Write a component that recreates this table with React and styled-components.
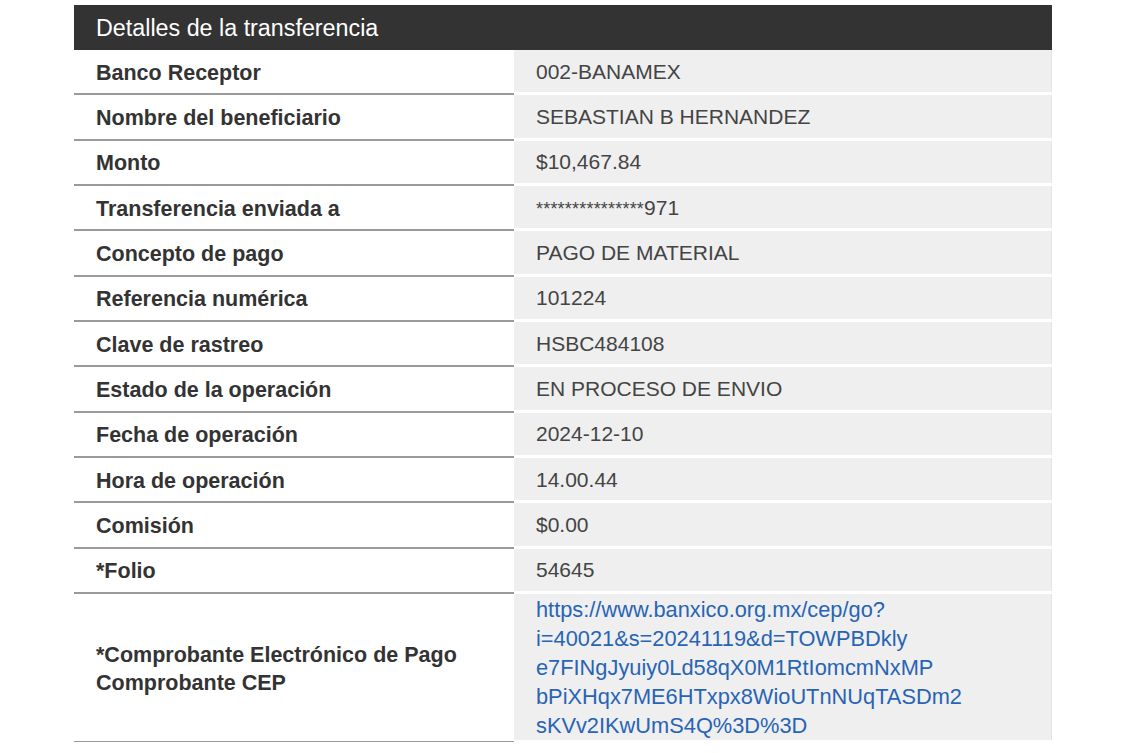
import styled, { createGlobalStyle } from 'styled-components';

const GlobalStyle = createGlobalStyle`
  body {
    margin: 0;
    background: #ffffff;
    font-family: 'Liberation Sans', Arial, sans-serif;
  }
`;

const Page = styled.div`
  padding: 5px 0 0 74px;
`;

const Table = styled.div`
  width: 978px;
`;

const Header = styled.div`
  height: 45px;
  background: #333333;
  color: #ffffff;
  font-size: 23.3px;
  display: flex;
  align-items: center;
  padding-left: 22px;
  padding-top: 1px;
  box-sizing: border-box;
`;

const Row = styled.div`
  display: grid;
  grid-template-columns: 440px 538px;
  height: ${(p) => p.$height || 45.35}px;
`;

const Label = styled.div`
  display: flex;
  align-items: center;
  padding: 2px 0 0 22px;
  border-bottom: 2px solid #9a9a9a;
  font-size: 21.5px;
  font-weight: 700;
  color: #333333;
  line-height: 28px;
  box-sizing: border-box;
`;

const Value = styled.div`
  display: flex;
  align-items: center;
  padding: 1px 0 0 22px;
  background: #efefef;
  border-bottom: 3px solid #ffffff;
  box-shadow: inset -1px 0 0 #e4e4e4;
  font-size: 21px;
  color: #444444;
  box-sizing: border-box;
`;

const Masked = styled.span`
  font-size: 18px;
  letter-spacing: 0.2px;
`;

const Link = styled.a`
  color: #2864b4;
  text-decoration: none;
  line-height: 29px;
  font-size: 21.8px;
`;

const rows = [
  ['Banco Receptor', '002-BANAMEX'],
  ['Nombre del beneficiario', 'SEBASTIAN B HERNANDEZ'],
  ['Monto', '$10,467.84'],
  ['Transferencia enviada a', null],
  ['Concepto de pago', 'PAGO DE MATERIAL'],
  ['Referencia numérica', '101224'],
  ['Clave de rastreo', 'HSBC484108'],
  ['Estado de la operación', 'EN PROCESO DE ENVIO'],
  ['Fecha de operación', '2024-12-10'],
  ['Hora de operación', '14.00.44'],
  ['Comisión', '$0.00'],
  ['*Folio', '54645'],
];

const linkLines = [
  'https://www.banxico.org.mx/cep/go?',
  'i=40021&s=20241119&d=TOWPBDkly',
  'e7FINgJyuiy0Ld58qX0M1RtIomcmNxMP',
  'bPiXHqx7ME6HTxpx8WioUTnNUqTASDm2',
  'sKVv2IKwUmS4Q%3D%3D',
];

export default function App() {
  return (
    <>
      <GlobalStyle />
      <Page>
        <Table>
          <Header>Detalles de la transferencia</Header>
          {rows.map(([label, value]) => (
            <Row key={label}>
              <Label>{label}</Label>
              <Value>
                {value === null ? (
                  <span>
                    <Masked>***************</Masked>971
                  </span>
                ) : (
                  value
                )}
              </Value>
            </Row>
          ))}
          <Row $height={148}>
            <Label>
              <div>
                *Comprobante Electrónico de Pago
                <br />
                Comprobante CEP
              </div>
            </Label>
            <Value>
              <Link href="#">
                {linkLines.map((l) => (
                  <div key={l}>{l}</div>
                ))}
              </Link>
            </Value>
          </Row>
        </Table>
      </Page>
    </>
  );
}
